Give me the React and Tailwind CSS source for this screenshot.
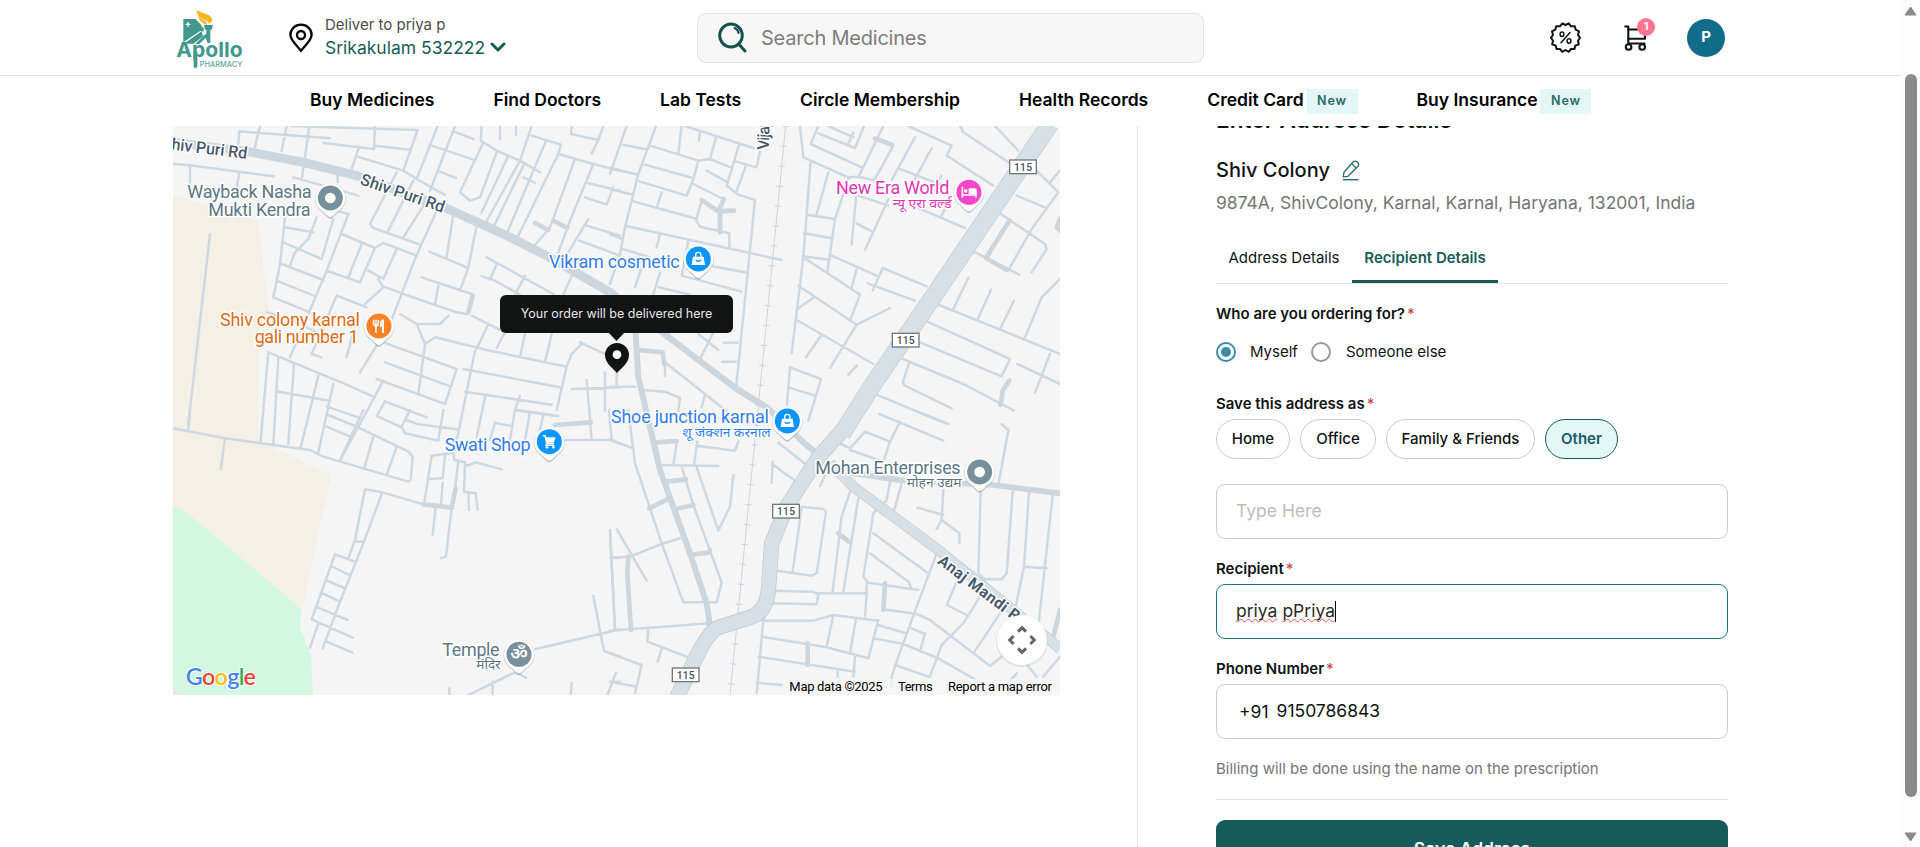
import React from "react";

const NAV = [
  { label: "Buy Medicines" },
  { label: "Find Doctors" },
  { label: "Lab Tests" },
  { label: "Circle Membership" },
  { label: "Health Records" },
  { label: "Credit Card", isNew: true },
  { label: "Buy Insurance", isNew: true },
];

function Logo() {
  return (
    <svg width="68" height="62" viewBox="0 0 204 186" className="shrink-0">
      <g transform="translate(4 1)">
        <path d="M21 32 H57 L75 50 V66 L21 102 Z" fill="#42978f" />
        <path d="M35 41v14M28 48h14" stroke="#fff" strokeWidth="4" />
        <path d="M22 106 L76 69 L80 84 L52 106 Z" fill="#42978f" />
        <path d="M64 47 L82 59 V70 L66 66 Z" fill="#42978f" />
        <path d="M83 50 H110 L106 64 H102 V104 H94 L88 88 L68 108 H56 L84 80 L90 76 V64 H86 Z" fill="#42978f" />
        <path d="M59 0 C62 16 104 13 107 33 C108 40 104 44 97 46 C98 34 70 36 64 18 C62 12 60 8 59 0 Z" fill="#fbb524" />
        <path d="M66 22 C76 38 96 36 91 49 C82 44 67 40 66 22 Z" fill="#fbb524" />
      </g>
      <text x="4" y="147" fontFamily="Inter, sans-serif" fontSize="62" fontWeight="700" fill="#42978f" textLength="199" lengthAdjust="spacingAndGlyphs">Apollo</text>
      <path d="M56 130h11v49h-11z" fill="#42978f" />
      <text x="74" y="178" fontFamily="Inter, sans-serif" fontSize="22" fontWeight="500" fill="#5fa8a1" textLength="128">PHARMACY</text>
    </svg>
  );
}

function Header() {
  return (
    <header className="flex h-[76px] shrink-0 items-center border-b border-[#e4e4e4] bg-white pl-[175px]">
      <div className="flex w-[114px] items-center pt-[3px]">
        <Logo />
      </div>
      <svg width="24" height="30" viewBox="0 0 24 30" fill="none" stroke="#000" strokeWidth="2.3" className="shrink-0">
        <path d="M12 28 C9 23 1.4 18 1.4 11.8 A10.6 10.2 0 0 1 22.6 11.8 C22.6 18 15 23 12 28Z" strokeLinejoin="round" />
        <circle cx="12" cy="12" r="4" />
      </svg>
      <div className="-mt-[2px] ml-[12px] flex w-[372px] flex-col">
        <span className="text-[15px] leading-[21px] text-[#4c4c4c]">Deliver to priya p</span>
        <span className="flex items-center gap-[5px] text-[17.5px] leading-[25px] text-[#175c5a]">
          Srikakulam 532222
          <svg width="16" height="10" viewBox="0 0 16 10" fill="none" stroke="#175c5a" strokeWidth="3" strokeLinecap="round" strokeLinejoin="round">
            <path d="M2 2 L8 8 L14 2" />
          </svg>
        </span>
      </div>
      <div className="flex h-[50px] w-[507px] shrink-0 items-center rounded-[9px] border border-[#e4e4e4] bg-[#f7f7f7] pl-[20px]">
        <svg width="29" height="31" viewBox="0 0 29 31" fill="none" stroke="#17504f" strokeLinecap="round">
          <ellipse cx="13" cy="13.5" rx="11.3" ry="11.5" strokeWidth="2.9" />
          <path d="M22 23.5 L27 29" strokeWidth="3" />
          <path d="M16.5 6 C19 7 20.3 8.8 20.6 11" strokeWidth="2" />
        </svg>
        <span className="ml-[14px] text-[20px] tracking-[-0.22px] text-[#7d7d7d]">Search Medicines</span>
      </div>
      <div className="ml-[346px] flex items-center">
        <svg width="31" height="31" viewBox="0 0 31 31" fill="none" stroke="#101414" strokeWidth="2" strokeLinejoin="round" strokeLinecap="round">
          <path d="M15.5 3 L18.7 1.3 L21 4.3 L24.8 4.3 L25.7 7.7 L29 9.3 L28 13 L30 15.7 L28 18.7 L28.8 22.2 L25.3 23.6 L24.5 27 L21 27 L18.7 29.8 L15.5 28 L12.3 29.8 L10 27 L6.5 27 L5.7 23.6 L2.2 22.2 L3 18.7 L1 15.7 L3 13 L2 9.3 L5.3 7.7 L6.2 4.3 L10 4.3 L12.3 1.3 Z" />
          <path d="M20 10.5 L11 20.8" strokeWidth="1.5" />
          <ellipse cx="12" cy="12.2" rx="1.9" ry="2.2" strokeWidth="1.5" />
          <ellipse cx="19" cy="19" rx="1.9" ry="2.2" strokeWidth="1.5" />
        </svg>
        <div className="relative ml-[43px]">
          <svg width="23" height="26" viewBox="0 0 23 26" fill="none" stroke="#101414" strokeWidth="2.1" strokeLinejoin="round" strokeLinecap="round">
            <path d="M1.2 1.5 H4.3 V18.5 H20.5" />
            <path d="M4.3 4.5 H20.8 L21 13.8 H4.3" />
            <circle cx="4.6" cy="22" r="2.8" />
            <circle cx="18.2" cy="22" r="2.8" />
          </svg>
          <span className="absolute -top-[7px] left-[13px] flex h-[18px] w-[18px] items-center justify-center rounded-full bg-[#ff758f] text-[11px] font-bold text-white">1</span>
        </div>
        <span className="ml-[40px] flex h-[38px] w-[38px] items-center justify-center rounded-full bg-[#106c89] text-[15px] font-bold text-white">P</span>
      </div>
    </header>
  );
}

function NavBar() {
  return (
    <nav className="flex h-[50px] shrink-0 items-center gap-[59px] bg-white pb-[2px] pl-[310px]">
      {NAV.map((n) => (
        <span key={n.label} className="flex items-center gap-[3px] whitespace-nowrap text-[17.5px] font-semibold text-black">
          {n.label}
          {n.isNew && (
            <span className="mt-[3px] flex h-[25px] w-[51px] items-center justify-center bg-[#e2f7f6] text-[12.5px] font-semibold tracking-[0.9px] text-[#2a6a66]">New</span>
          )}
        </span>
      ))}
    </nav>
  );
}

const ROADS_NW =
  "M9 119L60 124 312 157M60 124V190M208 146L200 190M205 60L208 22 270 27 480 43M270 6L255 70M350 6L335 80M418 6L396 160M370 160L565 215M365 6L743 18M615 6L612 75 460 57M615 65L720 77M743 18L700 140M565 75L545 135M560 97L700 140 740 165 825 213M803 6L740 165M855 6L780 200M850 22L910 45M785 65L910 107M810 143L858 162M935 6L932 50 980 80 1050 110 1110 145M940 55L870 205 900 230 930 220 980 85M990 6V45M1038 6V33M1085 6L1050 110 945 300M1085 35L1173 62 1165 90 1270 120 1350 140M1015 95L935 265M1060 125L970 310M1060 160L1095 177M1128 50L1010 330M1165 90L1040 345M1215 105L1140 310 1085 375M1270 120L1200 290 1160 400M1205 6L1203 30 1285 48 1265 88M1285 48L1300 6M1255 178L1350 200M1245 220L1310 242 1330 190M1255 285L1180 410M1250 305L1350 335M1228 350L1350 395M503 150V175M680 145L600 300 610 312 750 362M730 170L655 320M770 230L700 340M850 270L830 400M920 305L895 430 870 500M778 383L890 430M800 260L737 400 660 600 570 745M535 270L470 440 360 700M505 262L537 270M345 280L330 420 310 520 420 565M345 310L430 325M340 355L455 405 490 285M440 280L415 345 375 385 360 425M335 420L460 468M325 472L437 517M515 330L615 372 640 357 740 395M470 440L570 475M575 360L535 460M615 372L570 475M680 375L640 465 595 440M625 465L640 490 585 540M640 487L700 510 860 565 890 570M500 515L590 550M500 515L425 690 455 700M290 565L325 575M545 640L530 700M390 600L470 640M690 570L740 600 810 600 835 575M740 600L765 660 745 810M765 660L795 640 960 680 1190 728M640 655L860 735 825 840M645 715L835 785M620 765L820 838M755 460L905 510M805 485L795 540M905 575L1005 625 980 672M955 600L920 675M915 680L858 960M1065 630L1050 700M1145 630L1125 715M1190 728L1160 858M880 735L1170 790M885 803L1145 842M1040 858L1155 875M1050 815L1035 858M945 820L920 940M950 400L1150 510M935 457L965 465 1050 512M980 420L960 467M1065 455L1035 512M1205 455L1180 512M295 685L530 782 615 820M295 685L272 950M325 700L310 960M372 720L355 960M445 755L392 970M490 780L445 985M325 803L480 830M640 770L510 1010M645 832L770 880M645 832L620 876 695 910M1190 728L1205 690 1235 660M1230 655L1305 690M1305 745V860M1250 768L1258 860M1205 795L1350 790M120 330L55 900";
const ROADS_SW =
  "M9 55L165 85 420 120 460 140 715 215 722 210 728 140 715 125 560 50 475 15M60 0L55 60M165 85L152 178M470 50L540 80M470 -10L565 22M580 0L510 150M610 80L582 178M680 110L650 195M720 0L695 50 705 70 805 92 820 0M710 30L745 43 860 58M585 238L637 247 760 283M585 238L555 390 535 445M637 247L580 400 510 575 458 715M555 395H578M495 433L555 455M495 433L425 628 548 683M483 468L538 495M467 510L525 535M453 548L510 575M437 590L533 630M445 640L420 713M470 695L548 728M785 137L762 283M785 137L850 128 853 150 885 157 882 245 917 250 923 300M825 135L818 205 775 207M865 155L855 235M818 218L813 285M895 250L897 300M888 168L918 157 995 178M797 290L788 375M845 295L828 440 813 445M975 38L1025 48M975 38L960 90M1035 0L1165 18M1035 0L1020 90M1080 5L1065 90M1120 15L1110 60M1258 0L1265 90M1185 90H1325L1350 100M1317 0L1325 90M1320 362L1335 660M1270 558L1302 723 1350 740M1095 718L1350 658M895 855L1035 787 1068 803M968 815V855M838 835V855M1205 818L1202 855M1338 788L1312 855M1325 815H1350M1325 443H1350";
const ROADS_NE =
  "M50 6L0 150M40 62L108 76M138 6L85 150 45 310 30 390 0 480M120 65L265 110 300 105 362 130M215 6L205 88M270 20L267 50M318 40L300 105M225 6L430 72M388 60L350 185 385 212 435 228 378 795M450 80L440 130 375 112M408 125L378 205M290 140L348 172M105 122L248 162M265 110L250 165 230 215 88 172M155 205L142 245M250 180L340 225M70 232L262 285M275 230L258 290 270 308 358 328V370M45 305L515 408M150 330L140 370M235 350L215 455 395 503M300 425L405 445M145 490L240 512M0 330L38 345M0 132L85 152M0 195L68 212M38 375L120 400M95 430L75 490M150 445L130 510M570 6L580 100 715 160M625 6L602 60 755 130M625 28L735 72 762 6M655 6L730 40M730 25L712 65M820 6L745 160M850 65L795 165M715 160L745 158 790 168M915 40L845 168M965 72L915 165M995 155L985 170M870 135L1000 185M602 110L580 400 545 687M655 145L620 270M590 272L675 285M582 328L665 343M715 165L675 285 652 445M578 397L660 407M738 220L725 362M740 298L785 322M835 225L765 378M745 215L835 245M920 250L1065 312M1005 255L995 275M580 400L750 512 720 590M665 395L800 455M740 435L725 492M788 500L818 432 950 487M773 478L915 530M565 485L740 602M840 552L740 602 660 732M612 520L562 555M560 588L790 720M635 632L588 700M740 725L715 752M895 6L1025 65 1010 95 1150 185M1050 6L1060 25 1195 115M1155 6L1225 80M1280 140L1345 205 1265 315 1200 430M1220 215L1305 250M1350 140L1320 175M1165 265L1305 360 1310 375 1265 445M1090 382L1228 452M980 540L1350 690M1075 462L1030 555M1143 497L1102 588M1212 530L1170 615M1350 465L1295 520 1242 648M950 592L1200 705 1175 757 930 655M878 705L1060 780 1212 860M898 715L878 775 885 785 1025 853M1222 720L1350 780M1320 690L1275 805M790 808L1000 895M540 730L633 765 595 890M540 730L530 850M535 790L615 815M165 715V755M165 715L360 870M265 715L310 625M265 630L325 678M342 656H382M337 713H378M20 740V788M0 788H75M95 798L165 803 210 822 205 860M285 810L275 850";
const ROADS_SE =
  "M0 90L70 115M55 0L75 160 155 400 220 577 320 577 335 518 250 285 215 170M150 165L325 168M200 100L190 165M262 95L252 165M260 172L325 362 360 290 370 195M265 108L375 122 385 95M0 360L15 660M20 357L110 512M0 443L60 440 155 402 210 385M0 662L300 640M115 655L112 695 230 740M155 715L143 755M0 730L95 765 75 850M0 815L80 830M505 98L590 165M488 155L485 218M490 165L560 215M645 195L630 228M690 100L720 115 765 65 840 95 820 155 720 120M870 35L840 95M808 12L1000 92M910 0L1015 42M1175 42L1195 60 1165 225M720 245L695 320 668 545M745 265L700 545M575 290L640 297 648 305 620 490 605 497 500 482M575 290L548 485M840 215L830 270 790 310 760 500 775 518 925 540M780 430L895 515 905 535M875 220L850 310M790 370L950 487M980 430L920 590 865 740 845 800V830M1000 240L995 330 980 357M922 293L1000 315M995 330L1048 370V398M1112 245L1105 490 1125 508 1175 508 1190 490 1208 245M1257 245L1242 470 1310 475M1328 255L1285 650M1242 470L1215 600M1040 515L1010 585 1070 615M1110 560L1060 640 995 705 960 800M490 542L610 545 625 555 620 583 485 580M620 550L770 550 765 620M770 520V550M465 632L610 632 670 615 803 632M670 615L650 710M738 625L720 730M455 680L650 712 775 745 805 630M460 630L440 850M820 598L920 612 960 630 1140 768 1200 720M803 645L890 670M790 685L880 702 985 745 1150 840M735 740L730 800M445 740L735 785M440 818L515 825M683 785V800M945 670L930 725M905 655L940 670M1170 610L1090 730M1280 800L1240 750M1220 790L1190 825M1300 800L1350 740M855 765L955 800";

const LABEL = {
  fontFamily: "Roboto, 'Noto Sans', sans-serif",
  stroke: "#fff",
  strokeWidth: 9,
  strokeLinejoin: "round",
  paintOrder: "stroke",
};

function Pin({ x, y, color, children }) {
  return (
    <g transform={`translate(${x} ${y})`}>
      <path d="M0 62 C-8 62 -18 46 -28 39 A46 46 0 1 1 28 39 C18 46 8 62 0 62Z" fill="#8a9399" opacity=".55" />
      <path d="M0 57 C-8 57 -16 44 -27 37 A45 45 0 1 1 27 37 C16 44 8 57 0 57Z" fill="#fff" />
      <circle r="37.5" fill={color} />
      {children}
    </g>
  );
}

function Bag() {
  return (
    <g>
      <path d="M-16 -7 H16 L20 18 H-20Z" fill="#fff" />
      <path d="M-8 -6 V-12 A8 8 0 0 1 8 -12 V-6" fill="none" stroke="#fff" strokeWidth="4" />
      <path d="M-8 3 Q0 11 8 3" fill="none" stroke="#0b95ff" strokeWidth="4" />
    </g>
  );
}

function Shield({ x, y }) {
  return (
    <g>
      <rect x={x} y={y} width="80" height="41" fill="#fff" stroke="#71787e" strokeWidth="4" />
      <text x={x + 13} y={y + 32} fontFamily="Roboto, sans-serif" fontSize="31" fontWeight="500" fill="#4a5157" textLength="54">115</text>
    </g>
  );
}

function MapCanvas() {
  return (
    <svg width="887" height="569" viewBox="9 6 2661 1707" className="block">
      <rect x="9" y="6" width="2661" height="1707" fill="#f5f5f5" />
      <path d="M9 212L110 245 265 290 296 560 265 600V950L290 962 484 1052 396 1455 9 1145Z" fill="#f5f0e5" />
      <path d="M9 1145L50 1165 395 1455 390 1510 423 1595 429 1713H40L9 1690Z" fill="#d3f8e2" />
      <path d="M9 1690L40 1713H9Z" fill="#e6e8ee" />
      <g fill="none" stroke="#ced8e2" strokeWidth="7.5" strokeLinecap="round" strokeLinejoin="round">
        <path d={ROADS_NW} />
        <path d={ROADS_SW} transform="translate(0 858)" />
        <path d={ROADS_NE} transform="translate(1320 0)" />
        <path d={ROADS_SE} transform="translate(1320 858)" />
      </g>
      <g fill="none" stroke="#ccd6df" strokeWidth="14" strokeLinecap="round" strokeLinejoin="round">
        <path d="M1095 297L1135 318M1150 290L1192 312M908 515L895 565M760 1141L845 1151 857 1093M1155 903L1262 895" />
        <path d="M275 228L325 262 342 225M325 262L372 260M330 262V325M85 678L158 685 163 720M1198 290L1128 402 1190 438M1198 770L1178 800 1172 842M795 43L845 62M180 610L170 640M1350 285L1340 310 1350 320" transform="translate(1320 0)" />
        <path d="M130 98L200 93M170 215L228 208M118 295L178 265M195 298L250 285M240 435L295 428 300 420M55 440L52 490 63 660M685 370L720 397M825 520L820 600M593 700V765M465 600L458 630M1350 600L1330 680" transform="translate(1320 858)" />
      </g>
      <g fill="none" stroke="#ccd6df" strokeLinejoin="round">
        <path d="M9 55L235 83 400 115 560 155 830 253 1000 330 1130 395 1320 505" strokeWidth="27" />
        <path d="M1320 500L1470 620 1700 795 1790 850 1900 955 1940 988" strokeWidth="19" />
        <path d="M1395 600L1405 760 1435 888 1470 1038 1560 1288 1610 1438 1620 1505" strokeWidth="18" />
        <path d="M2030 1045L2200 1070 2470 1083 2670 1108" strokeWidth="17" />
      </g>
      <g fill="none" stroke="#d0d2d6">
        <path d="M1847 6L1680 1713" strokeWidth="3" />
        <path d="M1847 6L1680 1713" strokeWidth="19" strokeDasharray="3 57" />
      </g>
      {[
        { c: "#bcc9d1", w: [54, 46, 32] },
        { c: "#d7e0e7", w: [50, 42, 28] },
      ].map((s) => (
        <g key={s.c} fill="none" stroke={s.c} strokeLinejoin="round">
          <path d="M2640 0L2295 510 2110 780 2015 930" strokeWidth={s.w[0]} />
          <path d="M2025 910L1945 1000 1850 1148 1805 1258 1795 1400Q1788 1465 1740 1480L1645 1510Q1610 1525 1560 1640L1520 1720" strokeWidth={s.w[1]} />
          <path d="M1980 1018L2050 1088 2310 1282 2630 1540 2670 1575" strokeWidth={s.w[2]} />
        </g>
      ))}
      <Shield x={2519} y={108} />
      <Shield x={2167} y={628} />
      <Shield x={1808} y={1141} />
      <Shield x={1507} y={1632} />

      <g {...LABEL} fontSize="49" fontWeight="500" fill="#46586b">
        <text transform="translate(-26 73) rotate(7)" textLength="258">Shiv Puri Rd</text>
        <text transform="translate(568 180) rotate(19)" textLength="264">Shiv Puri Rd</text>
        <text transform="translate(1796 78) rotate(-88)" textLength="92">Vijay</text>
        <text transform="translate(2300 1316) rotate(37)" fontWeight="700" fontSize="47" textLength="322">Anaj Mandi Rd</text>
      </g>
      <g {...LABEL} fontSize="54">
        <g fill="#5c7683">
          <text x="52" y="222" textLength="373">Wayback Nasha</text>
          <text x="115" y="275" textLength="307">Mukti Kendra</text>
          <text x="1936" y="1049" textLength="436">Mohan Enterprises</text>
          <text x="2210" y="1090" fontSize="38" textLength="165" lengthAdjust="spacingAndGlyphs">मोहन उद्यम</text>
          <text x="817" y="1595" textLength="172">Temple</text>
          <text x="919" y="1635" fontSize="38" textLength="73" lengthAdjust="spacingAndGlyphs">मंदिर</text>
        </g>
        <g fill="#dd6a14">
          <text x="150" y="605" textLength="420">Shiv colony karnal</text>
          <text x="254" y="658" textLength="312">gali number 1</text>
        </g>
        <g fill="#2f7ded">
          <text x="1137" y="432" textLength="392">Vikram cosmetic</text>
          <text x="1323" y="897" textLength="474">Shoe junction karnal</text>
          <text x="1537" y="940" fontSize="38" textLength="265" lengthAdjust="spacingAndGlyphs">शू जंक्शन करनाल</text>
          <text x="824" y="980" textLength="258">Swati Shop</text>
        </g>
        <g fill="#e234b2">
          <text x="1998" y="210" textLength="340">New Era World</text>
          <text x="2168" y="253" fontSize="38" textLength="177" lengthAdjust="spacingAndGlyphs">न्यू एरा वर्ल्ड</text>
        </g>
      </g>

      <Pin x={481} y={222} color="#78909c"><circle r="16" fill="#fff" /></Pin>
      <Pin x={2429} y={1044} color="#78909c"><circle r="16" fill="#fff" /></Pin>
      <Pin x={1047} y={1591} color="#78909c">
        <text x="0" y="18" textAnchor="middle" fontSize="54" fontWeight="600" fill="#fff" fontFamily="'Noto Sans', sans-serif">ॐ</text>
      </Pin>
      <Pin x={627} y={606} color="#ff8126">
        <path d="M-16 -19V-8Q-16 0 -9 0T-2 -8V-19M-9 -19V21" fill="none" stroke="#fff" strokeWidth="4.5" />
        <path d="M15 -20V21H9V3H3V-8Q4 -19 15 -20Z" fill="#fff" />
      </Pin>
      <Pin x={1585} y={405} color="#0b95ff"><Bag /></Pin>
      <Pin x={1852} y={891} color="#0b95ff"><Bag /></Pin>
      <Pin x={1138} y={953} color="#0b95ff">
        <path d="M-20 -18H-13L-7 6H14" fill="none" stroke="#fff" strokeWidth="4.5" />
        <path d="M-12 -13H19L13 3H-8Z" fill="#fff" />
        <path d="M-8 3L-10 11H15" fill="none" stroke="#fff" strokeWidth="4" />
        <circle cx="-7" cy="17" r="4" fill="#fff" /><circle cx="12" cy="17" r="4" fill="#fff" />
      </Pin>
      <Pin x={2397} y={205} color="#f847c8">
        <path d="M-20 -17V16M-20 8H21M21 16V-8" fill="none" stroke="#fff" strokeWidth="4.5" />
        <path d="M-1 -12H16Q23 -12 23 -4V5H-1Z" fill="#fff" />
        <circle cx="-10" cy="-4" r="5.5" fill="#fff" />
      </Pin>

      <path d="M1341 747C1330 734 1305 718 1305 693A36 36 0 0 1 1377 693C1377 718 1352 734 1341 747Z" fill="#111413" />
      <circle cx="1341" cy="692" r="13" fill="#fff" />

      <text x="47" y="1683" fontFamily="Lato, Inter, sans-serif" fontSize="70" fontWeight="600" stroke="#fff" strokeWidth="6" paintOrder="stroke" textLength="211">
        <tspan fill="#4285f4">G</tspan><tspan fill="#ea4335">o</tspan><tspan fill="#fbbc05">o</tspan><tspan fill="#4285f4">g</tspan><tspan fill="#34a853">l</tspan><tspan fill="#ea4335">e</tspan>
      </text>

      <rect x="1840" y="1665" width="830" height="48" fill="#f5f5f5" opacity=".75" />
      <circle cx="2556" cy="1551" r="78" fill="#9aa0a6" opacity=".2" />
      <circle cx="2556" cy="1548" r="75" fill="#fff" />
      <g fill="none" stroke="#666" strokeWidth="9">
        <path d="M2544 1523L2556 1511 2568 1523M2544 1573L2556 1585 2568 1573M2531 1536L2519 1548 2531 1560M2581 1536L2593 1548 2581 1560" />
      </g>
      <g fontFamily="Roboto, sans-serif" fontSize="39" fill="#000">
        <text x="1858" y="1700" textLength="280">Map data ©2025</text>
        <text x="2184" y="1700" textLength="104">Terms</text>
        <text x="2334" y="1700" textLength="312">Report a map error</text>
      </g>
    </svg>
  );
}

function MapPane() {
  return (
    <div className="relative h-[569px] w-[887px] shrink-0 overflow-hidden">
      <MapCanvas />
      <div className="absolute left-[327px] top-[169px] flex h-[38px] w-[233px] items-center justify-center rounded-[6px] bg-[#111413] text-[12.5px] text-[#e6e6e6]">
        <span className="whitespace-nowrap">Your order will be delivered here</span>
        <svg className="absolute left-[108px] top-[37px]" width="17" height="9" viewBox="0 0 17 9"><path d="M0 0H17L8.5 9Z" fill="#111413" /></svg>
      </div>
    </div>
  );
}

function Label({ children }) {
  return (
    <div className="flex h-5 items-center gap-[2px] text-[15px] font-semibold text-[#101414]">
      {children}
      <span className="font-medium text-[#cf4b4b]">*</span>
    </div>
  );
}

function Chip({ children, width, active }) {
  return (
    <span
      className={
        "flex h-10 items-center justify-center rounded-full border text-[15px] " +
        width +
        (active ? " border-[#175c5a] bg-[#e2f7f6] font-semibold text-[#175c6a]" : " border-[#cbcbcb] font-medium text-[#101414]")
      }
    >
      {children}
    </span>
  );
}

function AddressForm() {
  return (
    <section className="flex w-[512px] shrink-0 flex-col *:shrink-0">
      <h2 className="-mt-[21px] h-[30px] text-[22.5px] font-semibold leading-[30px] tracking-[0.1px] text-[#101414]">Enter Address Details</h2>
      <div className="mt-[23px] flex h-6 items-center gap-3">
        <span className="text-[20px] font-medium text-[#101414]">Shiv Colony</span>
        <svg width="18" height="21" viewBox="0 0 18 21" fill="none" stroke="#2a6e6b" strokeWidth="1.3" strokeLinejoin="round">
          <path d="M1.2 16.8L2 12.3 11 2Q13 .2 15.4 2 17.6 4 15.8 6.5L6 16.3Z" />
          <path d="M9.7 3.6L14.2 8" />
          <path d="M1 19.7H16.5" strokeWidth="1.5" />
        </svg>
      </div>
      <p className="mt-[9px] h-6 whitespace-nowrap text-[17.5px] leading-6 text-[#757575]">9874A, ShivColony, Karnal, Karnal, Haryana, 132001, India</p>
      <div className="mt-[21px] flex h-[48px] border-b border-[#e4e4e4] text-[15px]">
        <span className="flex w-[136px] justify-center pt-[11px] text-[#101414]">Address Details</span>
        <span className="flex w-[146px] justify-center border-b-[3px] border-[#175c5a] pt-[11px] font-semibold text-[#175c5a]">Recipient Details</span>
      </div>
      <div className="mt-5"><Label>Who are you ordering for?</Label></div>
      <div className="mt-[18px] flex h-5 items-center text-[15px] text-[#101414]">
        <span className="flex h-5 w-5 items-center justify-center rounded-full border-2 border-[#3d8ba4]">
          <span className="h-[10px] w-[10px] rounded-full bg-[#3d8ba4]" />
        </span>
        <span className="ml-[14px] w-[61px]">Myself</span>
        <span className="h-5 w-5 rounded-full border-2 border-[#999]" />
        <span className="ml-[15px]">Someone else</span>
      </div>
      <div className="mt-8"><Label>Save this address as</Label></div>
      <div className="mt-[5px] flex gap-[10px]">
        <Chip width="w-[74px]">Home</Chip>
        <Chip width="w-[76px]">Office</Chip>
        <Chip width="w-[149px]">Family &amp; Friends</Chip>
        <Chip width="w-[73px]" active>Other</Chip>
      </div>
      <div className="mt-[25px] flex h-[55px] items-center rounded-[9px] border border-[#cbcbcb] pl-[19px] text-[17.5px] text-[#bdbdb9]">Type Here</div>
      <div className="mt-5"><Label>Recipient</Label></div>
      <div className="mt-[5px] flex h-[55px] items-center rounded-[9px] border border-[#17708d] pl-[19px] text-[17.5px] text-[#2b2b2b]">
        <span className="flex items-center gap-[5px] whitespace-pre">
          <span className="underline decoration-[#f04a4a] decoration-wavy decoration-[0.8px] underline-offset-[1px] [text-decoration-skip-ink:none]">priya</span>
          <span className="underline decoration-[#f04a4a] decoration-wavy decoration-[0.8px] underline-offset-[1px] [text-decoration-skip-ink:none]">pPriya</span>
        </span>
        <span className="h-[21px] w-px bg-black" />
      </div>
      <div className="mt-5"><Label>Phone Number</Label></div>
      <div className="mt-[5px] flex h-[55px] items-center rounded-[9px] border border-[#cbcbcb] pl-[22px] text-[17.5px] text-[#101414]">
        <span className="mr-2 pt-px">+91</span>
        <span>9150786843</span>
      </div>
      <p className="mt-5 h-5 text-[15px] leading-5 text-[#757575]">Billing will be done using the name on the prescription</p>
      <div className="mt-5 h-px bg-[#e4e4e4]" />
      <button className="mt-5 h-[58px] rounded-[9px] bg-[#175c5a] text-[17.5px] font-semibold text-white">Save Address</button>
    </section>
  );
}

function Scrollbar() {
  return (
    <div className="flex h-[847px] w-[19px] flex-col items-center bg-[#fcfcfc]">
      <svg width="13" height="10" viewBox="0 0 13 10" className="mt-[6px]"><path d="M6.5 1L12 9H1Z" fill="#8a8a8a" stroke="#8a8a8a" strokeLinejoin="round" /></svg>
      <div className="mt-[58px] h-[723px] w-[12px] rounded-full bg-[#8a8a8a]" />
      <svg width="13" height="10" viewBox="0 0 13 10" className="mt-[35px]"><path d="M6.5 9L12 1H1Z" fill="#8a8a8a" stroke="#8a8a8a" strokeLinejoin="round" /></svg>
    </div>
  );
}

export default function App() {
  return (
    <div className="flex h-[847px] w-full overflow-hidden bg-white font-['Inter',sans-serif]">
      <div className="flex w-[1901px] shrink-0 flex-col">
        <Header />
        <NavBar />
        <main className="flex h-[721px] overflow-hidden pl-[173px]">
          <MapPane />
          <div className="ml-[77px] mr-[78px] h-full w-px shrink-0 bg-[#e4e4e4]" />
          <AddressForm />
        </main>
      </div>
      <Scrollbar />
    </div>
  );
}
